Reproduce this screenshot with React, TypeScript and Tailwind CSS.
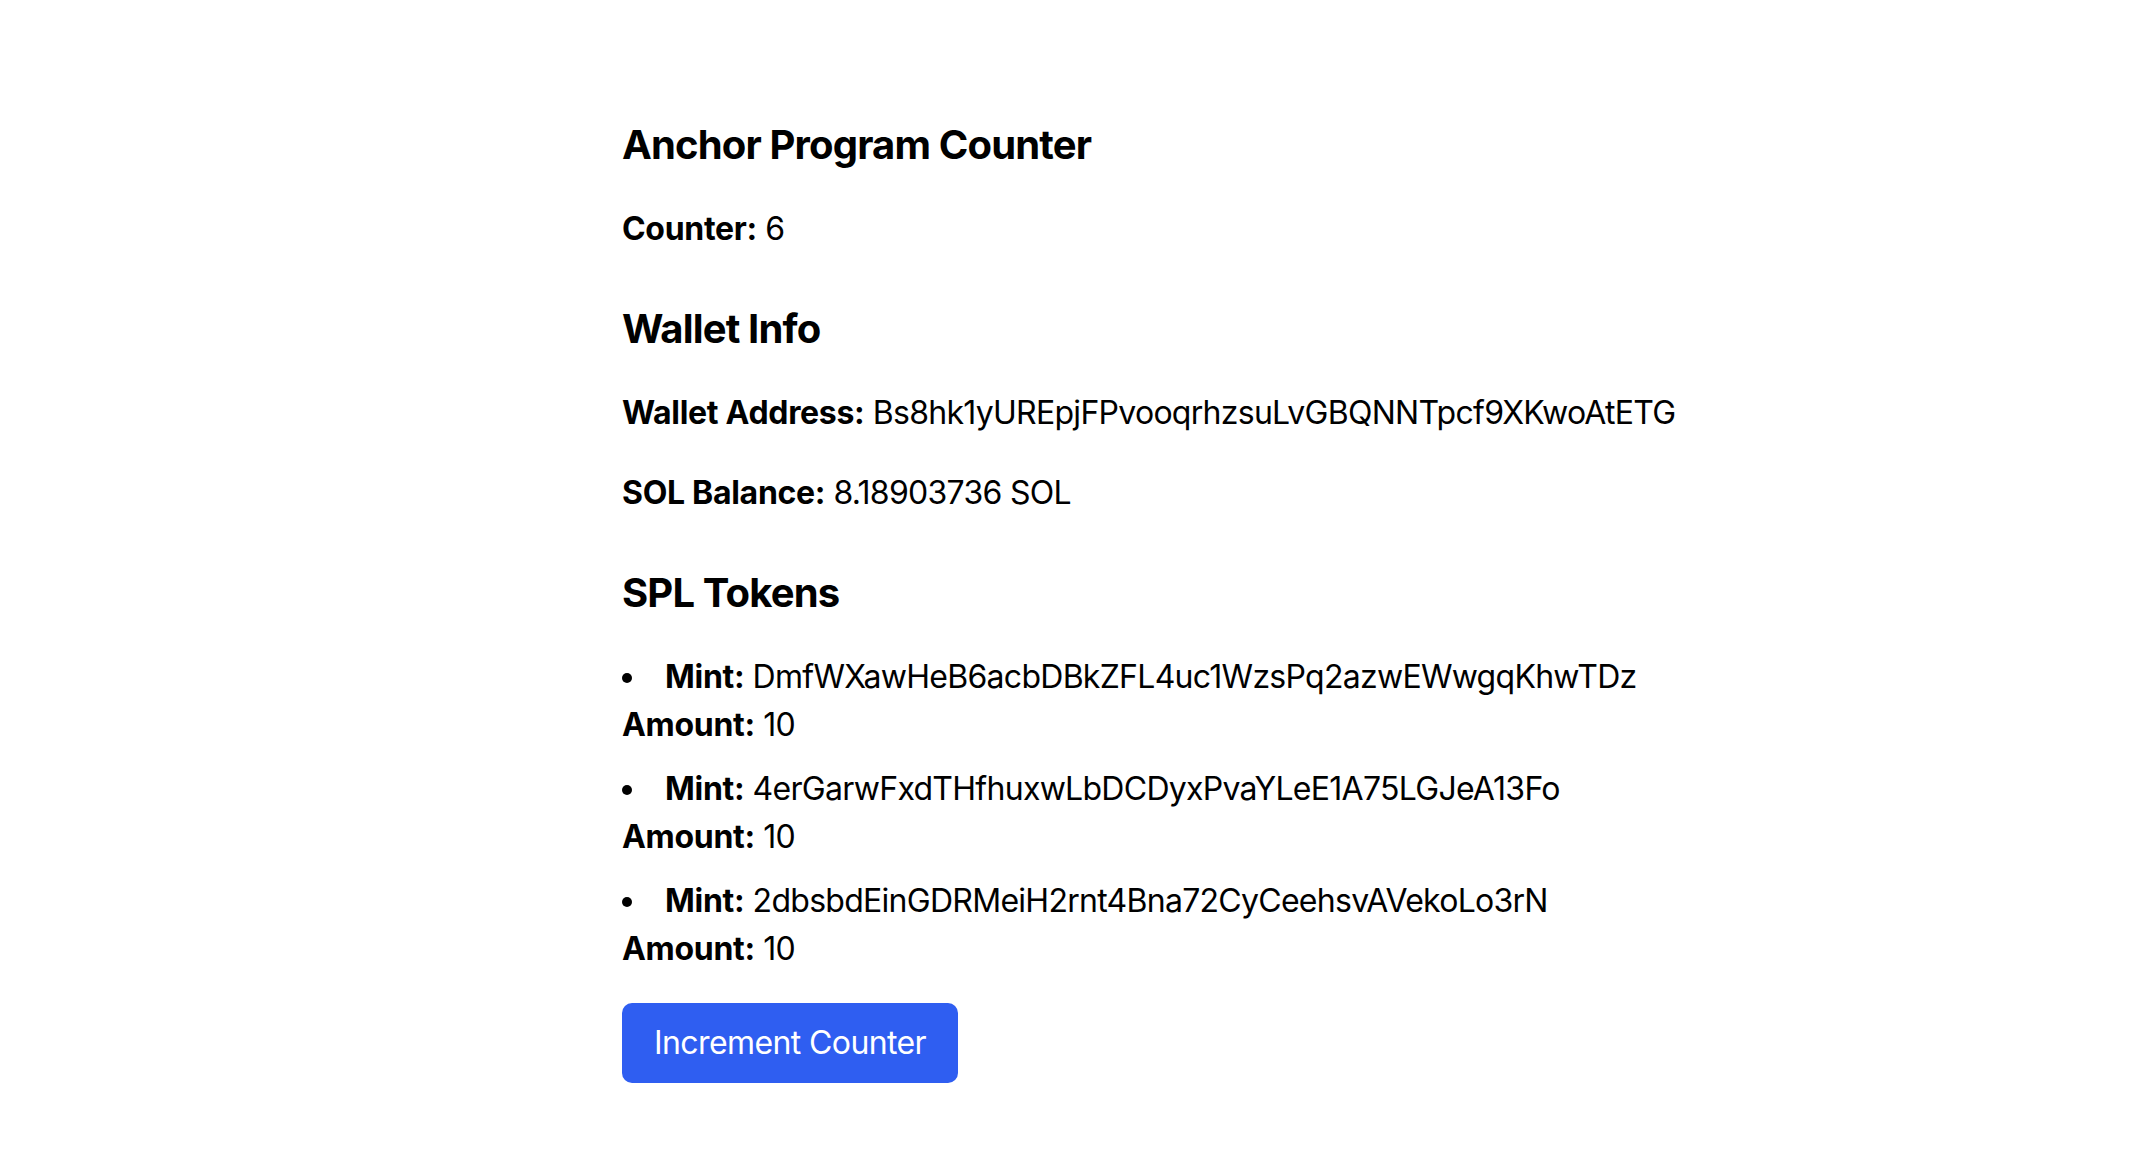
const tokens = [
  { mint: "DmfWXawHeB6acbDBkZFL4uc1WzsPq2azwEWwgqKhwTDz", amount: 10 },
  { mint: "4erGarwFxdTHfhuxwLbDCDyxPvaYLeE1A75LGJeA13Fo", amount: 10 },
  { mint: "2dbsbdEinGDRMeiH2rnt4Bna72CyCeehsvAVekoLo3rN", amount: 10 },
];

const App = () => {
  return (
    <div className="min-h-screen bg-white text-black font-['Inter',sans-serif] text-[32px] leading-[48px] tracking-[-0.72px]">
      <div className="pl-[622px] pt-[117px] pb-20 flex flex-col gap-12">
        {/* Counter */}
        <section className="flex flex-col gap-8">
          <h2 className="text-[40px] leading-[56px] font-bold tracking-[-0.85px]">Anchor Program Counter</h2>
          <p>
            <strong className="tracking-[-0.3px]">Counter:</strong> 6
          </p>
        </section>

        {/* Wallet */}
        <section className="flex flex-col gap-8">
          <h2 className="text-[40px] leading-[56px] font-bold tracking-[-0.85px]">Wallet Info</h2>
          <p className="whitespace-nowrap">
            <strong className="tracking-[-0.3px]">Wallet Address:</strong> Bs8hk1yUREpjFPvooqrhzsuLvGBQNNTpcf9XKwoAtETG
          </p>
          <p>
            <strong className="tracking-[-0.3px]">SOL Balance:</strong> 8.18903736 SOL
          </p>
        </section>

        {/* Tokens */}
        <section className="flex flex-col gap-8">
          <h2 className="text-[40px] leading-[56px] font-bold tracking-[-0.85px]">SPL Tokens</h2>
          <ul className="list-disc list-inside flex flex-col gap-4">
            {tokens.map((t) => (
              <li key={t.mint} className="whitespace-nowrap">
                <strong className="tracking-[-0.3px]">Mint:</strong> {t.mint}
                <br />
                <strong className="tracking-[-0.3px]">Amount:</strong> {t.amount}
              </li>
            ))}
          </ul>
          <div className="-mt-[2px]">
            <button className="bg-[#2f5ef1] text-white px-8 py-4 rounded-[10px] tracking-[-0.6px]">
              Increment Counter
            </button>
          </div>
        </section>
      </div>
    </div>
  );
};

export default App;
